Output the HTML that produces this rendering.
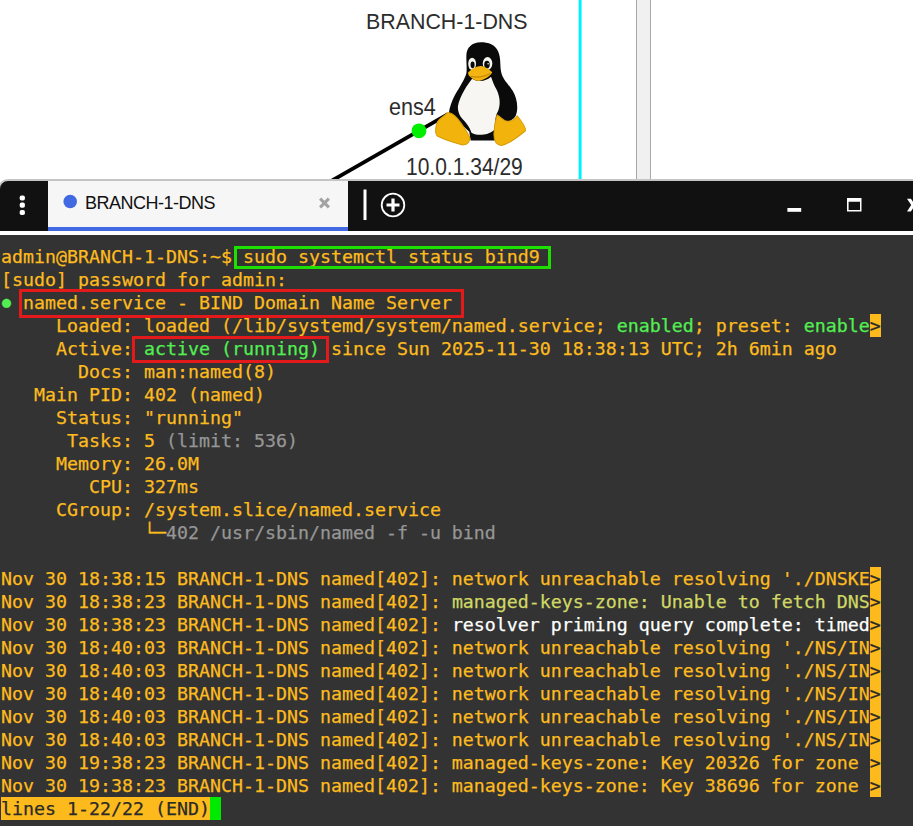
<!DOCTYPE html>
<html><head><meta charset="utf-8">
<style>
html,body{margin:0;padding:0;}
body{width:913px;height:826px;position:relative;overflow:hidden;background:#fff;font-family:"Liberation Sans",sans-serif;}
.abs{position:absolute;}
#topo{left:0;top:0;width:913px;height:181px;background:#fff;}
.lbl{position:absolute;color:#2c2c2c;white-space:nowrap;}
#win{left:0;top:179px;width:921px;height:660px;background:#111;border:2px solid #c4c4c4;border-radius:10px 0 0 0;box-sizing:border-box;margin-left:-2px;overflow:hidden;}
#tab{left:48px;top:181px;width:300px;height:46px;background:#f6f6f6;}
#tabline{left:48px;top:227px;width:300px;height:4px;background:#4169e1;}
#sep{left:0;top:231px;width:913px;height:4px;background:#fff;}
#term{left:0;top:235px;width:913px;height:591px;background:#333;}
pre{margin:0;position:absolute;left:1px;top:245.4px;font-family:"DejaVu Sans Mono","Liberation Mono",monospace;font-size:18.27px;line-height:23px;color:#fdbb1e;white-space:pre;-webkit-text-stroke:0.25px;}
.g{color:#52ee52;}
.d{color:#969696;}
.w{color:#fff;}
.y{color:#d0d864;}
.m{color:#2a2a2a;}
.hl{position:absolute;background:#fdba1c;}

.box{position:absolute;box-sizing:border-box;}
</style></head><body>
<div class="abs" id="topo">
<svg class="abs" style="left:0;top:0" width="913" height="181" viewBox="0 0 913 181">
<rect x="578.6" y="0" width="3" height="181" fill="#00f0ff"/>
<rect x="636" y="0" width="15" height="181" fill="#f0f0f0"/>
<rect x="636" y="0" width="1" height="181" fill="#a8a8a8"/>
<rect x="650" y="0" width="1" height="181" fill="#a8a8a8"/>
<line x1="326" y1="184" x2="448" y2="114.1" stroke="#000" stroke-width="3.8"/>
<circle cx="419" cy="130.8" r="7.4" fill="#00ee00"/>
<g transform="translate(430,30) scale(0.1453)">
<path d="M350 85 C290 85 250 120 250 180 C250 230 255 270 250 300 C240 340 200 400 170 450 C150 490 135 530 130 570 L270 700 L280 760 L450 760 L460 600 C500 640 560 640 590 590 C610 540 600 470 570 420 C540 370 500 340 490 290 C480 240 490 200 470 150 C450 100 400 85 350 85 Z" fill="#0a0a0a"/>
<path d="M290 335 C262 370 205 450 192 525 C190 570 210 600 237 627 C260 652 280 685 284 706 C312 730 400 728 440 690 C452 650 445 610 460 575 C488 530 485 465 458 410 C440 380 430 350 420 322 C390 352 330 362 290 335 Z" fill="#f7f6f2"/>
<ellipse cx="290" cy="233" rx="27" ry="42" fill="#f4f4f0"/>
<ellipse cx="396" cy="230" rx="33" ry="44" fill="#f4f4f0"/>
<ellipse cx="293" cy="240" rx="14" ry="24" fill="#0a0a0a"/>
<ellipse cx="392" cy="238" rx="19" ry="27" fill="#0a0a0a"/>
<circle cx="400" cy="232" r="5" fill="#fff"/>
<path d="M262 292 C290 265 320 248 350 248 C380 250 410 275 428 290 C420 315 380 335 345 350 C320 355 285 335 265 310 Z" fill="#f3b40f"/>
<path d="M280 318 C320 330 370 325 415 298" stroke="#8a5a00" stroke-width="4" fill="none"/>
<path d="M120 570 C90 600 55 615 48 640 C35 680 35 710 50 730 C110 760 180 780 225 792 C260 790 280 765 272 735 C250 695 222 648 188 608 C170 588 150 567 120 570 Z" fill="#f2b40c" stroke="#d69c04" stroke-width="7" stroke-linejoin="round"/>
<path d="M462 585 C450 620 440 680 440 720 C440 760 455 790 490 795 C530 790 600 740 655 695 C665 680 640 640 600 590 C585 615 560 630 530 628 C505 625 490 600 462 585 Z" fill="#f2b40c" stroke="#d69c04" stroke-width="7" stroke-linejoin="round"/>
</g>
</svg>
<div class="lbl" style="left:366px;top:9px;font-size:22.5px;transform:scaleX(.95);transform-origin:0 0;">BRANCH-1-DNS</div>
<div class="lbl" style="left:389px;top:93px;font-size:24px;transform:scaleX(.897);transform-origin:0 0;">ens4</div>
<div class="lbl" style="left:406px;top:153px;font-size:24px;transform:scaleX(.875);transform-origin:0 0;">10.0.1.34/29</div>
</div>
<div class="abs" id="win"></div>
<div class="abs" id="tab"></div>
<div class="abs" id="tabline"></div>
<div class="abs" id="sep"></div>
<div class="abs" id="term"></div>
<div class="lbl" style="left:85px;top:192.5px;font-size:18px;letter-spacing:-0.5px;color:#111;">BRANCH-1-DNS</div>
<svg class="abs" style="left:0;top:181px" width="913" height="50" viewBox="0 181 913 50">
<g fill="#fff"><rect x="19.7" y="195.4" width="5.2" height="5.2" rx="1.8"/><rect x="19.7" y="202.6" width="5.2" height="5.2" rx="1.8"/><rect x="19.7" y="209.9" width="5.2" height="5.2" rx="1.8"/></g>
<circle cx="70.200" cy="201.500" r="6.800" fill="#4169e1"/>
<path d="M320.1 198.6 L328.9 207.4 M328.9 198.6 L320.1 207.4" stroke="#a2a2a2" stroke-width="3" fill="none"/>
<rect x="363.500" y="189.500" width="3" height="30.500" fill="#fff"/>
<circle cx="393" cy="205" r="11.300" fill="none" stroke="#fff" stroke-width="1.800"/>
<path d="M393 198.500 V211.500 M386.500 205 H399.500" stroke="#fff" stroke-width="3.200" fill="none"/>
<rect x="787.4" y="208" width="13.8" height="3.8" fill="#fff"/>
<path d="M847 198 H861.500 V211.500 H847 Z M848.6 201.8 V210 H860 V201.8 Z" fill="#fff" fill-rule="evenodd"/>
<path d="M907 198.8 H910.9 L914.5 204 L918.1 198.8 H922 L917.6 205.1 L922 211.4 H918.1 L914.5 206.2 L910.9 211.4 H907 L911.2 205.1 Z" fill="#fff"/>
</svg>
<div class="hl" style="left:870px;top:567px;width:11px;height:230px;"></div>
<div class="hl" style="left:870px;top:314px;width:11px;height:23px;"></div>
<div class="hl" style="left:1px;top:797px;width:209px;height:23px;"></div>
<div class="hl" style="left:210px;top:797px;width:11px;height:23px;background:#00ea00;"></div>
<pre>admin@BRANCH-1-DNS:~$ sudo systemctl status bind9
[sudo] password for admin:
<span class="g" style="display:inline-block;width:11px;transform:translateY(-0.8px) scale(.82);">●</span> named.service - BIND Domain Name Server
     Loaded: loaded (/lib/systemd/system/named.service; <span class="g">enabled</span>; preset: <span class="g">enable</span><span class="m">&gt;</span>
     Active: <span class="g">active (running)</span> since Sun 2025-11-30 18:38:13 UTC; 2h 6min ago
       Docs: man:named(8)
   Main PID: 402 (named)
     Status: "running"
      Tasks: 5 <span class="d">(limit: 536)</span>
     Memory: 26.0M
        CPU: 327ms
     CGroup: /system.slice/named.service
             └─<span class="d">402 /usr/sbin/named -f -u bind</span>

Nov 30 18:38:15 BRANCH-1-DNS named[402]: network unreachable resolving './DNSKE<span class="m">&gt;</span>
Nov 30 18:38:23 BRANCH-1-DNS named[402]: <span class="y">managed-keys-zone: Unable to fetch DNS</span><span class="m">&gt;</span>
Nov 30 18:38:23 BRANCH-1-DNS named[402]: <span class="w">resolver priming query complete: timed</span><span class="m">&gt;</span>
Nov 30 18:40:03 BRANCH-1-DNS named[402]: network unreachable resolving './NS/IN<span class="m">&gt;</span>
Nov 30 18:40:03 BRANCH-1-DNS named[402]: network unreachable resolving './NS/IN<span class="m">&gt;</span>
Nov 30 18:40:03 BRANCH-1-DNS named[402]: network unreachable resolving './NS/IN<span class="m">&gt;</span>
Nov 30 18:40:03 BRANCH-1-DNS named[402]: network unreachable resolving './NS/IN<span class="m">&gt;</span>
Nov 30 18:40:03 BRANCH-1-DNS named[402]: network unreachable resolving './NS/IN<span class="m">&gt;</span>
Nov 30 19:38:23 BRANCH-1-DNS named[402]: managed-keys-zone: Key 20326 for zone <span class="m">&gt;</span>
Nov 30 19:38:23 BRANCH-1-DNS named[402]: managed-keys-zone: Key 38696 for zone <span class="m">&gt;</span>
<span class="m">lines 1-22/22 (END)</span></pre>
<div class="box" style="left:234px;top:246px;width:317px;height:23.3px;border:3px solid #1ee000;"></div>
<div class="box" style="left:19.3px;top:289.1px;width:444.5px;height:28.8px;border:3px solid #e41a1a;"></div>
<div class="box" style="left:132.3px;top:335.8px;width:196.4px;height:27.2px;border:3px solid #e41a1a;"></div>
</body></html>
